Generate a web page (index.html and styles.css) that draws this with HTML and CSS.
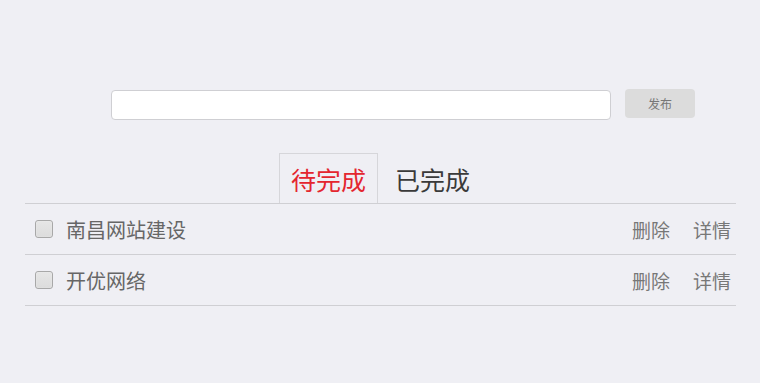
FILE: index.html
```html
<!DOCTYPE html>
<html lang="zh">
<head>
<meta charset="utf-8">
<title>Todo</title>
<link rel="stylesheet" href="styles.css">
</head>
<body>
<div class="app">
  <div class="composer">
    <input class="composer-input" type="text">
    <button class="publish-btn">发布</button>
  </div>
  <div class="tabs">
    <div class="tab tab-active">待完成</div>
    <div class="tab">已完成</div>
  </div>
  <ul class="list">
    <li class="item">
      <span class="check"></span>
      <span class="item-title">南昌网站建设</span>
      <span class="actions"><span class="action">删除</span><span class="action">详情</span></span>
    </li>
    <li class="item">
      <span class="check"></span>
      <span class="item-title">开优网络</span>
      <span class="actions"><span class="action">删除</span><span class="action">详情</span></span>
    </li>
  </ul>
</div>
</body>
</html>
```
FILE: styles.css
```css
html, body {
  margin: 0;
  padding: 0;
  background: #efeff4;
  font-family: "Noto Sans CJK SC", "Noto Sans", sans-serif;
}
.app {
  width: 711px;
  margin-left: 25px;
  padding-top: 90px;
}
.composer {
  display: flex;
  align-items: flex-start;
  padding-left: 86px;
}
.composer-input {
  box-sizing: border-box;
  width: 500px;
  height: 30px;
  margin: 0;
  border: 1px solid #cfcfd3;
  border-radius: 4px;
  background: #fff;
  outline: none;
}
.publish-btn {
  box-sizing: border-box;
  width: 70px;
  height: 29px;
  margin: -1px 0 0 14px;
  border: none;
  border-radius: 4px;
  background: #dcdcdc;
  color: #777;
  font-family: "Noto Sans CJK SC", sans-serif;
  font-size: 12px;
  padding: 0;
}
.tabs {
  display: flex;
  margin-top: 33px;
  padding-left: 254px;
}
.tab {
  box-sizing: border-box;
  height: 50px;
  padding: 0 11px;
  line-height: 50px;
  font-size: 25px;
  color: #3a3a3a;
  border: 1px solid transparent;
  border-bottom: none;
}
.tab + .tab {
  padding-left: 16px;
}
.tab-active {
  color: #e4262f;
  border-color: #d6d6da;
}
.list {
  list-style: none;
  margin: 0;
  padding: 0;
  border-top: 1px solid #cfcfd3;
}
.item {
  display: flex;
  align-items: center;
  height: 50px;
  border-bottom: 1px solid #cfcfd3;
}
.check {
  box-sizing: border-box;
  width: 18px;
  height: 18px;
  margin-left: 10px;
  margin-right: 13px;
  border: 1px solid #a8a8a8;
  border-radius: 3px;
  background: linear-gradient(#e6e6e6, #dcdcdc);
  box-shadow: inset 0 0 1px #fff;
}
.item-title {
  font-size: 20px;
  color: #666;
  flex: 1;
}
.actions {
  display: flex;
  gap: 23px;
  margin-right: 5px;
}
.action {
  font-size: 19px;
  color: #777;
}
```
